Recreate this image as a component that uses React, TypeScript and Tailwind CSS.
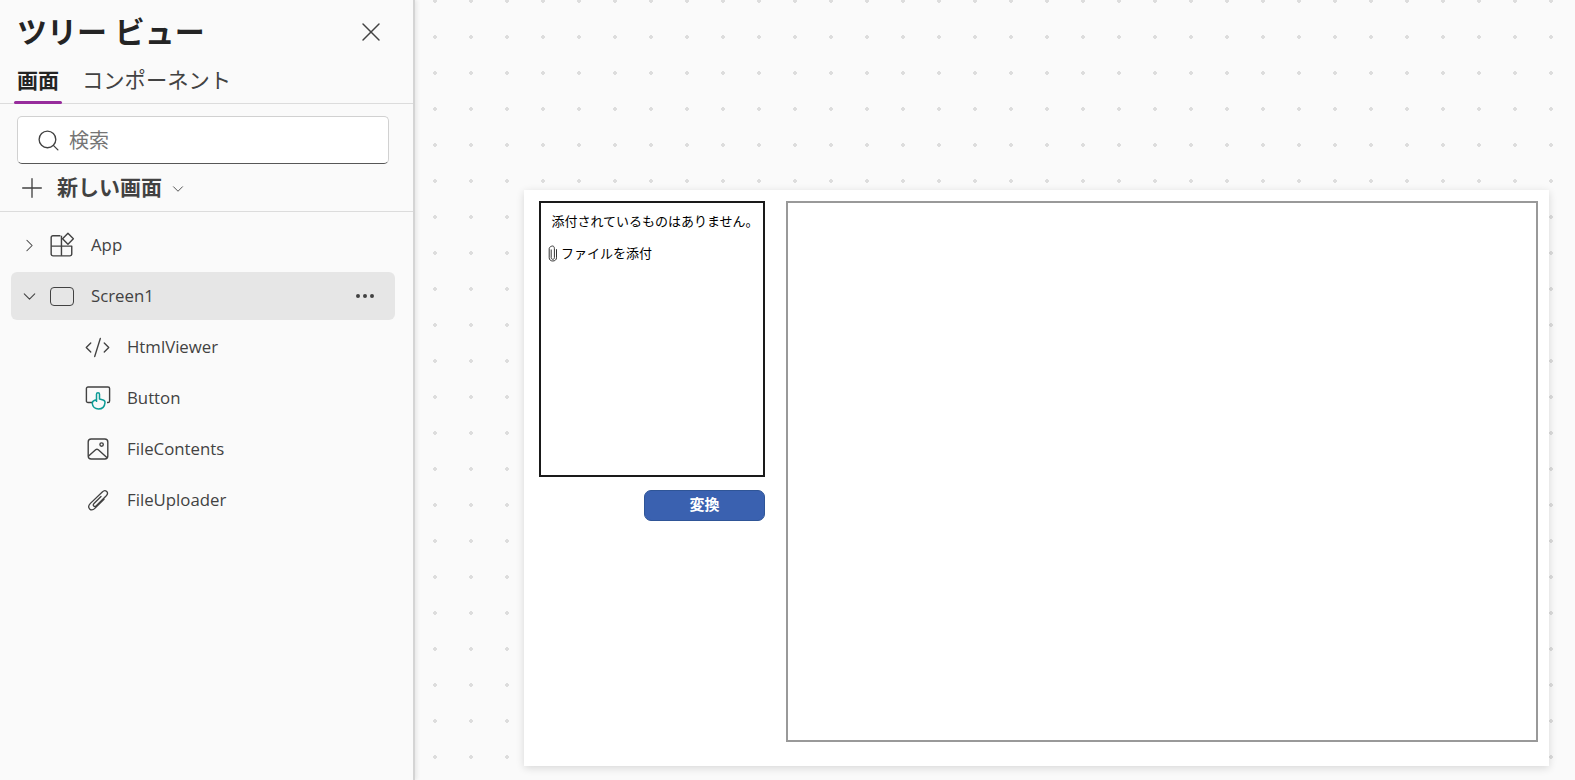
import { X, Search, Plus, ChevronDown, ChevronRight, MoreHorizontal, CodeXml } from 'lucide-react';

const FONT = 'font-["Open_Sans","Noto_Sans_CJK_JP",sans-serif]';

function AppIcon() {
  return (
    <svg width="26" height="26" viewBox="0 0 24 24" fill="none" stroke="#424242" strokeWidth="1.3">
      <path d="M10.5 3.5H3.6a1.6 1.6 0 0 0-1.6 1.6v15.3a1.6 1.6 0 0 0 1.6 1.6h15.8a1.6 1.6 0 0 0 1.6-1.6V13H11.5V3.5" strokeLinejoin="round" />
      <path d="M2 13h9.5M11.5 13v9" />
      <path d="M17.5 1.2l5 5-5 5-5-5z" strokeLinejoin="round" />
    </svg>
  );
}

function ButtonIcon() {
  return (
    <svg width="26" height="26" viewBox="0 0 26 26" fill="none">
      <path d="M8 17.5H3a1.6 1.6 0 0 1-1.6-1.6V3.6A1.6 1.6 0 0 1 3 2h20a1.6 1.6 0 0 1 1.6 1.6v12.3a1.6 1.6 0 0 1-1.6 1.6h-1" stroke="#424242" strokeWidth="1.4" />
      <path d="M11.5 17V9.2a1.5 1.5 0 0 1 3 0V14l3.6 1c1.4.4 2 1.3 1.9 2.6-.3 3.4-2.4 6.4-6.5 6.4-3.4 0-6-2.4-6.2-5.6-.1-1.6.9-2.7 2.4-3.2l1.8-.5" stroke="#0e9c97" strokeWidth="1.5" strokeLinejoin="round" />
    </svg>
  );
}

function ImageIcon() {
  return (
    <svg width="24" height="24" viewBox="0 0 24 24" fill="none" stroke="#424242" strokeWidth="1.4">
      <rect x="2.2" y="2" width="19.6" height="20" rx="3" />
      <circle cx="15.6" cy="7.6" r="1.7" />
      <path d="M2.6 19l7-6.2a2 2 0 0 1 2.7 0l8.8 8" />
    </svg>
  );
}

function ClipIcon() {
  return (
    <svg width="24" height="24" viewBox="0 0 24 24" fill="none" stroke="#424242" strokeWidth="1.3" strokeLinecap="round">
      <path d="M15 8.5l-7 7c-1 1-1 2-.3 2.6.7.6 1.7.5 2.6-.4l10-10c1.4-1.5 1.5-3.1.4-4.2-1.2-1.1-2.9-1-4.4.5L4.4 15.4c-1.9 2-2.1 4.2-.8 5.5 1.4 1.3 3.6 1.1 5.5-.8l8.9-8.9" />
    </svg>
  );
}

function SmallClip() {
  return (
    <svg width="10" height="17" viewBox="0 0 10 17" fill="none" stroke="#333" strokeWidth="1">
      <path d="M3.2 4.5v8.2c0 1 .7 1.6 1.6 1.6s1.6-.6 1.6-1.6V3.6C6.4 2 5.6 1 4.6 1S1.2 2 1.2 3.6v9.2c0 1.9 1.5 3.2 3.6 3.2s3.7-1.3 3.7-3.2V4.2" />
    </svg>
  );
}

function TreeRow({ label, icon, indent, chevron, selected }: { label: string; icon: React.ReactNode; indent?: boolean; chevron?: 'right' | 'down'; selected?: boolean }) {
  return (
    <div className={`flex h-[48px] items-center rounded-md ${selected ? 'bg-[#e6e6e6]' : ''}`}>
      {indent ? (
        <div className="w-[72px] shrink-0" />
      ) : (
        <div className="flex w-[36px] shrink-0 justify-center pl-[1px] text-[#424242]">
          {chevron === 'right' ? <ChevronRight size={21} strokeWidth={1.2} /> : <ChevronDown size={21} strokeWidth={1.2} />}
        </div>
      )}
      <div className="flex w-[44px] shrink-0 items-center pl-[2px]">{icon}</div>
      <span className="flex-1 text-[16.8px] text-[#424242]">{label}</span>
      {selected && <MoreHorizontal size={24} strokeWidth={2} className="mr-[18px] text-[#424242]" />}
    </div>
  );
}

export default function App() {
  return (
    <div className={`flex h-[780px] w-[1575px] overflow-hidden bg-[#fafafa] ${FONT}`}>
      {/* ツリービュー */}
      <aside className="z-10 flex w-[415px] shrink-0 flex-col border-r-[2px] border-[#d4d4d4] bg-[#fafafa] shadow-[2px_0_4px_rgba(0,0,0,0.08)]">
        <div className="flex items-center justify-between pl-[17px] pr-[26px] pt-[11px]">
          <h1 className="text-[30px] leading-[42px] font-bold text-[#242424]">ツリー ビュー</h1>
          <X size={32} strokeWidth={1.1} className="text-[#424242]" />
        </div>
        <div className="mt-[4px] flex gap-[23px] border-b border-[#dcdcdc] pl-[17px]">
          <div className="relative h-[46px] pt-[8px] text-[21px] leading-[30px] font-bold text-[#242424]">
            画面
            <div className="absolute -bottom-px -left-[3px] -right-[3px] h-[3px] rounded-sm bg-[#972c9c]" />
          </div>
          <div className="pt-[8px] text-[21.3px] leading-[30px] text-[#424242]">コンポーネント</div>
        </div>
        <div className="mx-[17px] mt-[12px] flex h-[48px] w-[372px] items-center rounded-[5px] border border-[#d1d1d1] border-b-[#575757] bg-white pl-[18px]">
          <Search size={25} strokeWidth={1.3} className="text-[#424242]" />
          <span className="ml-[8px] pt-[1px] text-[20px] text-[#757575]">検索</span>
        </div>
        <div className="flex h-[48px] items-center border-b border-[#dcdcdc] pl-[16px]">
          <Plus size={32} strokeWidth={1} className="text-[#424242]" />
          <span className="ml-[9px] pt-[1px] text-[21px] font-bold text-[#424242]">新しい画面</span>
          <ChevronDown size={18} strokeWidth={1.2} className="ml-[7px] mt-[3px] text-[#424242]" />
        </div>
        <div className="flex flex-col gap-[3px] pl-[11px] pr-[18px] pt-[9px]">
          <TreeRow label="App" chevron="right" icon={<AppIcon />} />
          <TreeRow label="Screen1" chevron="down" selected icon={
            <div className="ml-[1px] h-[19px] w-[24px] rounded-[4px] border-[1.5px] border-[#424242]" />
          } />
          <TreeRow label="HtmlViewer" indent icon={<CodeXml size={27} strokeWidth={1.2} className="-ml-[1px] text-[#424242]" />} />
          <TreeRow label="Button" indent icon={<ButtonIcon />} />
          <TreeRow label="FileContents" indent icon={<div className="ml-[1px]"><ImageIcon /></div>} />
          <TreeRow label="FileUploader" indent icon={<div className="ml-[1px]"><ClipIcon /></div>} />
        </div>
      </aside>

      {/* キャンバス */}
      <main className="flex-1 bg-[radial-gradient(circle,#dddddd_1.6px,transparent_2px)] bg-[size:36px_36px] bg-[position:2px_-17px] pl-[109px] pt-[190px]">
        <div className="flex h-[576px] w-[1025px] gap-[21px] bg-white pl-[15px] pt-[11px] shadow-[0_2px_8px_rgba(0,0,0,0.14)]">
          <div className="flex w-[226px] flex-col">
            <div className="h-[276px] border-[2px] border-[#1a1a1a]">
              <p className="mt-[8px] pl-[6px] text-center text-[13px] leading-[20px] text-black">添付されているものはありません。</p>
              <div className="mt-[12px] flex items-center gap-[3px] pl-[7px] text-[13px] leading-[20px] text-black">
                <SmallClip />
                ファイルを添付
              </div>
            </div>
            <button className="ml-auto mt-[13px] h-[31px] w-[121px] rounded-[7px] border border-[#2f5597] bg-[#3a61b0] pb-[3px] text-[15px] font-bold text-white">
              変換
            </button>
          </div>
          <div className="h-[541px] w-[752px] border-[2px] border-[#999999]" />
        </div>
      </main>
    </div>
  );
}
